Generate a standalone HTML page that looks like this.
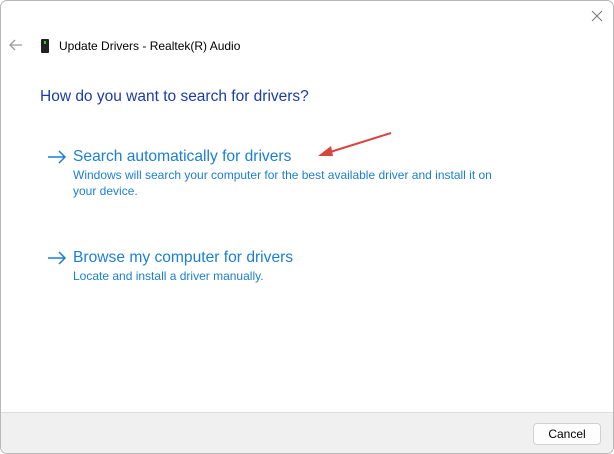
<!DOCTYPE html>
<html><head><style>
html,body{margin:0;padding:0;width:614px;height:454px;overflow:hidden;background:#fff;font-family:"Segoe UI","Liberation Sans",sans-serif;}
.win{position:absolute;left:0;top:0;width:612px;height:452px;border:1px solid #b8b8b8;border-radius:7px;background:#fff;overflow:hidden;}
.footer{position:absolute;left:0;right:0;top:411px;bottom:0;background:#f0f0f0;border-top:1px solid #dcdcdc;}
.btn{position:absolute;left:532px;top:10px;width:66px;height:20px;border:1px solid #d0d0d0;border-radius:4px;background:#fdfdfd;font-size:12px;text-align:center;line-height:20px;color:#000;}
.t{position:absolute;white-space:nowrap;}
</style></head><body>
<div class="win">
<svg class="t" style="left:590px;top:9px" width="12" height="12"><path d="M1 1L11 11M11 1L1 11" stroke="#777" stroke-width="1"/></svg>
<svg class="t" style="left:8px;top:38px" width="14" height="12"><path d="M13 6H1M6 1L1 6L6 11" stroke="#9a9a9a" stroke-width="1.3" fill="none"/></svg>
<div class="t" style="left:40px;top:38px;width:8px;height:14px;background:#222;border-radius:1px"><div style="position:absolute;left:3px;top:2px;width:2px;height:3px;background:#3c3"></div></div>
<div class="t" style="left:58px;top:38px;font-size:12px;color:#000">Update Drivers - Realtek(R) Audio</div>
<div class="t" style="left:39px;top:87px;font-size:15.5px;color:#1a3ca8">How do you want to search for drivers?</div>
<svg class="t" style="left:46px;top:149px" width="20" height="14"><path d="M1 7H18M12 1L18 7L12 13" stroke="#1a7fd4" stroke-width="1.5" fill="none"/></svg>
<div class="t" style="left:72px;top:147px;font-size:15.6px;color:#1a7fd4">Search automatically for drivers</div>
<div class="t" style="left:72px;top:166px;font-size:12px;color:#1a7fd4;line-height:16px">Windows will search your computer for the best available driver and install it on<br>your device.</div>
<svg class="t" style="left:46px;top:250px" width="20" height="14"><path d="M1 7H18M12 1L18 7L12 13" stroke="#1a7fd4" stroke-width="1.5" fill="none"/></svg>
<div class="t" style="left:72px;top:248px;font-size:15.6px;color:#1a7fd4">Browse my computer for drivers</div>
<div class="t" style="left:72px;top:268px;font-size:12px;color:#1a7fd4">Locate and install a driver manually.</div>
<svg class="t" style="left:310px;top:128px" width="85" height="32"><path d="M80 4L16 24" stroke="#d9453e" stroke-width="2"/><path d="M7 27L20 17L22 27Z" fill="#d9453e"/></svg>
<div class="footer"><div class="btn">Cancel</div></div>
</div>
</body></html>
